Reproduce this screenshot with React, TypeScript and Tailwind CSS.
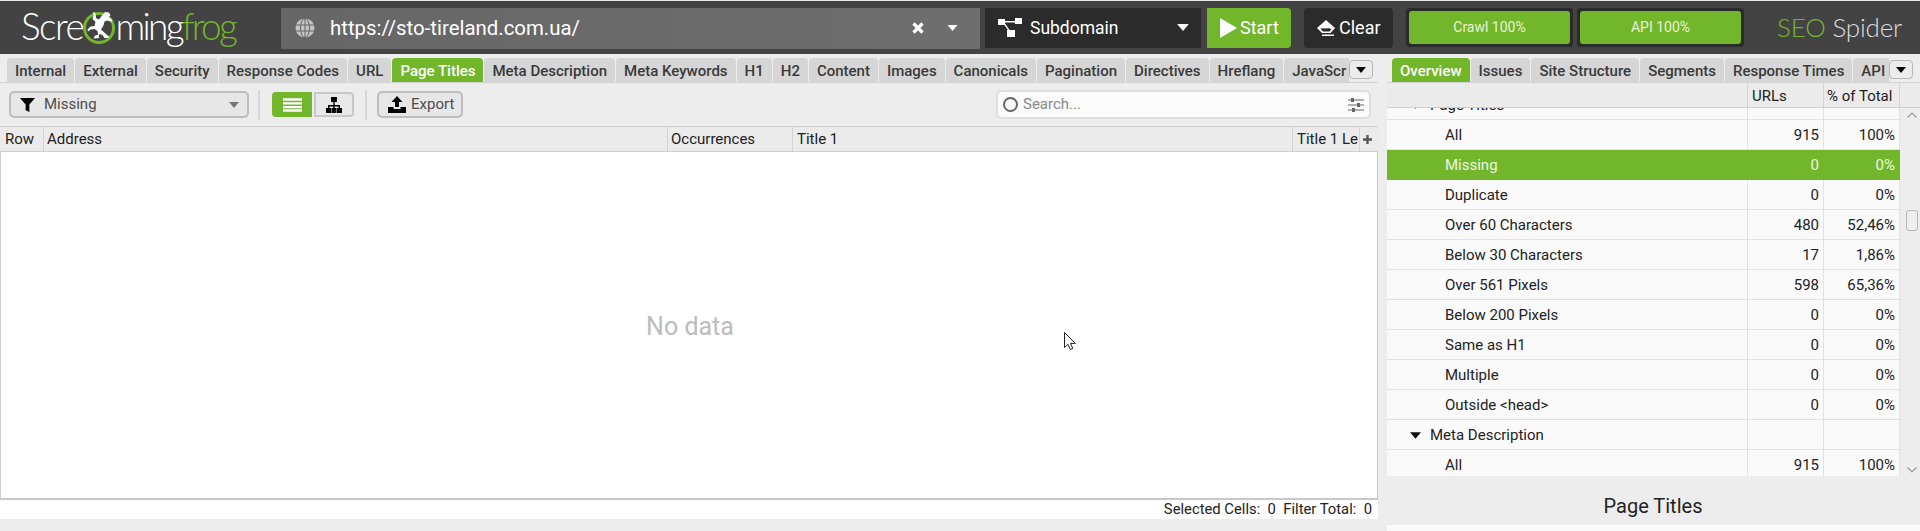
import React from "react";

const green = "bg-[#72b62b]";

function Caret({ className }: { className: string }) {
  return (
    <svg viewBox="0 0 10 6" className={className} fill="currentColor">
      <path d="M0 0h10L5 6z" />
    </svg>
  );
}

function FrogMark() {
  return (
    <svg viewBox="0 0 36 36" className="w-[36px] h-[36px] -mx-[2px] shrink-0 mt-[3px]">
      <circle cx="18" cy="19" r="14.500" fill="none" stroke="#72b62b" strokeWidth="3" />
      <path
        d="M12 3l2.500 1 .5 5 3 1.500 3-4 3-3.500 4 .5 1.500 3-2 1.500 4 3-1 2-4-1.500-3 1-1 4-2.500 4 5 4.500 3 2.500-.5 1.500h-4l-2-3-3-1-1 3 1 1-6 .5 1.500-3 3-.5-.5-4-3-2-4 .5-2.500 2-.5-2 3-3 4-.5 1-4-3-3 1-4z"
        fill="#fff"
      />
    </svg>
  );
}

function HeaderBar() {
  return (
    <header className="h-[54px] shrink-0 border-t border-[#e8e8e8] bg-[#434343] flex items-center [font-family:Roboto,sans-serif]">
      <div className="w-[281px] shrink-0 pl-[21px] flex items-center h-full pb-[4px] [font-family:Lato,sans-serif] font-light text-[37px] tracking-[-1.5px] text-white leading-none">
        <span>Scre</span>
        <FrogMark />
        <span className="tracking-[-2.700px]">ming</span>
        <span className="tracking-[-2.700px] text-[#72b62b]">frog</span>
      </div>
      <div className="w-[699px] shrink-0 h-[41px] mt-[1px] flex items-center bg-gradient-to-r from-[#666666] to-[#6e6e6e] pl-[14px] text-white">
        <svg viewBox="0 0 20 20" className="w-[20px] h-[20px] text-[#c4c4c4]" fill="none" stroke="currentColor">
          <circle cx="10" cy="10" r="9.500" fill="currentColor" stroke="none" />
          <g stroke="#666" strokeWidth="1">
            <ellipse cx="10" cy="10" rx="4.500" ry="9.500" />
            <path d="M10 0v20M0.500 7h19M0.500 13h19" />
          </g>
        </svg>
        <span className="ml-[15px] pt-[1px] text-[20.400px] flex-1">https://sto-tireland.com.ua/</span>
        <svg viewBox="0 0 12 12" className="w-[12px] h-[12px] mr-[23px]" stroke="#fff" strokeWidth="3.200">
          <path d="M1.500 1.500l9 9M10.500 1.500l-9 9" />
        </svg>
        <Caret className="w-[11px] h-[6px] mr-[22px] text-white" />
      </div>
      <div className="ml-[5px] w-[216px] shrink-0 h-[40px] flex items-center bg-[#2b2b2b] pl-[13px] text-white">
        <svg viewBox="0 0 24 19" className="w-[24px] h-[19px]" fill="#fff">
          <rect x="0" y="1" width="7" height="6" />
          <rect x="17" y="0" width="7" height="6" />
          <rect x="9" y="12" width="8" height="7" />
          <path d="M6 3h12v1.500H6zM5 5l1-1 7 10-1 1z" />
        </svg>
        <span className="ml-[8px] pt-[1px] text-[17.500px] flex-1">Subdomain</span>
        <Caret className="w-[12px] h-[7px] mr-[12px] text-white" />
      </div>
      <div className={`ml-[6px] w-[84px] shrink-0 h-[40px] flex items-center pl-[13px] rounded-r-[4px] text-white ${green}`}>
        <svg viewBox="0 0 17 20" className="w-[17px] h-[20px]" fill="#fff">
          <path d="M0 0l17 10L0 20z" />
        </svg>
        <span className="ml-[3px] text-[18px]">Start</span>
      </div>
      <div className="ml-[13px] w-[89px] shrink-0 h-[40px] flex items-center pl-[13px] rounded-[4px] bg-[#2b2b2b] text-white">
        <svg viewBox="0 0 18 16" className="w-[18px] h-[16px]" fill="#fff">
          <path d="M9 0l9 8-4.500 5H5L0 8z" />
          <path d="M3.200 8.600L6 11.500h6.500l1.800-2-1.500-1.200z" fill="#2b2b2b" />
          <rect x="5" y="14.500" width="12" height="1.500" />
        </svg>
        <span className="ml-[4px] text-[18px]">Clear</span>
      </div>
      <div className="ml-[13px] w-[167px] shrink-0 h-[39px] p-[3px] rounded-[4px] bg-[#2b2b2b]">
        <div className={`h-full rounded-[3px] flex items-center justify-center text-[14px] text-[#e8f3d8] ${green}`}>Crawl 100%</div>
      </div>
      <div className="ml-[4px] w-[167px] shrink-0 h-[39px] p-[3px] rounded-[4px] bg-[#2b2b2b]">
        <div className={`h-full rounded-[3px] flex items-center justify-center text-[14px] text-[#e8f3d8] ${green}`}>API 100%</div>
      </div>
      <div className="ml-[33px] [font-family:Lato,sans-serif] font-light text-[26px] leading-none tracking-[-0.200px] pb-[2px]">
        <span className="text-[#72b62b]">SEO</span> <span className="text-[#dcdcdc]">Spider</span>
      </div>
    </header>
  );
}

function Tab({ label, active }: { label: string; active?: boolean }) {
  return (
    <div
      className={`h-[24px] px-[8px] pt-[2px] shrink-0 flex items-center rounded-t-[4px] text-[15px] font-medium whitespace-nowrap ${
        active ? "bg-[#72b62b] text-white" : "bg-[#d6d6d6] text-[#3a3a3a]"
      }`}
    >
      {label}
    </div>
  );
}

function MoreButton() {
  return (
    <div className="w-[24px] h-[19px] shrink-0 mb-[3px] flex items-center justify-center rounded-[4px] border border-[#b8b8b8] bg-[#ececec]">
      <Caret className="w-[10px] h-[6px] text-black" />
    </div>
  );
}

const leftTabs = ["Internal", "External", "Security", "Response Codes", "URL", "Page Titles", "Meta Description", "Meta Keywords", "H1", "H2", "Content", "Images", "Canonicals", "Pagination", "Directives", "Hreflang", "JavaScr"];
const rightTabs = ["Overview", "Issues", "Site Structure", "Segments", "Response Times", "API"];

function ToolbarSep() {
  return <div className="w-[2px] h-[30px] shrink-0 bg-[#d8d8d8]" />;
}

function Toolbar() {
  return (
    <div className="h-[43px] shrink-0 flex items-center pl-[9px] text-[15px] text-[#4d4d4d]">
      <div className="w-[240px] h-[27px] flex items-center rounded-[5px] border-2 border-[#bdbdbd] bg-[#e7e7e7] pl-[9px]">
        <svg viewBox="0 0 16 16" className="w-[15px] h-[15px]" fill="#000">
          <path d="M0 1h16l-6 7v8l-4-2V8z" />
        </svg>
        <span className="ml-[9px] flex-1">Missing</span>
        <Caret className="w-[10px] h-[6px] mr-[8px] text-[#777]" />
      </div>
      <div className="ml-[9px]"><ToolbarSep /></div>
      <div className={`ml-[12px] w-[40px] h-[25px] rounded-l-[4px] flex items-center justify-center ${green}`}>
        <svg viewBox="0 0 20 14" className="w-[19px] h-[14px]" fill="#fff">
          <path d="M0 0h20v2.500H0zM0 4h20v2.500H0zM0 8h20v2.500H0zM0 11.500h20V14H0z" />
        </svg>
      </div>
      <div className="ml-[2px] w-[40px] h-[25px] rounded-r-[4px] border-2 border-[#c8c8c8] bg-[#e9e9e9] flex items-center justify-center">
        <svg viewBox="0 0 18 16" className="w-[18px] h-[16px]" fill="#000">
          <path d="M6 0h6v5H6zM1 11h5v5H1zM6.500 11h5v5h-5zM12 11h5v5h-5zM8.300 5h1.400v3h5.300v3h-1.400V9.400H9.700V11H8.300V9.400H4.400V11H3V8h5.300z" />
        </svg>
      </div>
      <div className="ml-[11px]"><ToolbarSep /></div>
      <div className="ml-[10px] w-[86px] h-[27px] rounded-[5px] border-2 border-[#bdbdbd] bg-[#e7e7e7] flex items-center pl-[9px]">
        <svg viewBox="0 0 18 17" className="w-[18px] h-[17px]" fill="#000">
          <path d="M9 0l5.500 6H11v5H7V6H3.500zM0 11h5.500v2h7v-2H18v6H0z" />
        </svg>
        <span className="ml-[5px]">Export</span>
      </div>
      <div className="ml-[533px] w-[375px] h-[29px] rounded-[6px] border-2 border-[#dedede] bg-[#fbfbfb] flex items-center pl-[5px] text-[#8a8a8a]">
        <span className="w-[15px] h-[15px] rounded-full border-2 border-[#666] shrink-0" />
        <span className="ml-[5px] flex-1">Search...</span>
        <svg viewBox="0 0 16 14" className="w-[16px] h-[14px] mr-[5px]" fill="#666">
          <path d="M0 1.500h16v1H0zM0 6.500h16v1H0zM0 11.500h16v1H0z" />
          <rect x="3" y="0" width="3" height="4" />
          <rect x="9" y="5" width="3" height="4" />
          <rect x="4" y="10" width="3" height="4" />
        </svg>
      </div>
    </div>
  );
}

function TableHeader() {
  return (
    <div className="h-[26px] shrink-0 flex items-center bg-[#ebebeb] border-y border-[#cfcfcf] text-[15px] text-[#222] leading-none">
      <div className="w-[44px] h-full flex items-center pl-[5px] border-r border-[#d4d4d4]">Row</div>
      <div className="w-[624px] h-full flex items-center pl-[3px] border-r border-[#d4d4d4]">Address</div>
      <div className="w-[125px] h-full flex items-center pl-[3px] border-r border-[#d4d4d4]">Occurrences</div>
      <div className="w-[500px] h-full flex items-center pl-[4px] border-r border-[#d4d4d4]">Title 1</div>
      <div className="w-[67px] h-full flex items-center pl-[4px] border-r border-[#d4d4d4] overflow-hidden whitespace-nowrap">Title 1 Le</div>
      <div className="flex-1 h-full flex items-center pl-[3px]">
        <svg viewBox="0 0 10 10" className="w-[9px] h-[9px]" fill="#555">
          <path d="M3.700 0h2.600v3.700H10v2.600H6.300V10H3.700V6.300H0V3.700h3.700z" />
        </svg>
      </div>
    </div>
  );
}

function LeftPane() {
  return (
    <section className="w-[1378px] shrink-0 flex flex-col relative">
      <div className="h-[29px] shrink-0 flex items-end pl-[7px] border-b border-[#d2d2d2]">
        <div className="w-[1342px] flex gap-[1px] overflow-hidden">
          {leftTabs.map((t) => (
            <Tab key={t} label={t} active={t === "Page Titles"} />
          ))}
        </div>
        <MoreButton />
      </div>
      <Toolbar />
      <TableHeader />
      <div className="h-[348px] shrink-0 bg-white border-x border-b-2 border-[#c8c8c8] border-l-[#d0d0d0] flex items-center justify-center pt-[4px] pl-[2px] text-[25px] text-[#bcbcbc]">
        No data
      </div>
      <div className="h-[19px] shrink-0 bg-white flex items-center justify-end pr-[6px] text-[14.800px] text-[#222] leading-none whitespace-pre">
        Selected Cells:  0  Filter Total:  0
      </div>
      <svg viewBox="0 0 13 20" className="absolute left-[1064px] top-[278px] w-[13px] h-[20px]" fill="#fff" stroke="#222" strokeWidth="1">
        <path d="M.500.500v15l3.500-3.200 2.300 5.200 2.500-1.100-2.300-5h4.800z" />
      </svg>
    </section>
  );
}

type Row = { label: string; urls?: string; pct?: string; head?: boolean; active?: boolean };

const rows: Row[] = [
  { label: "Page Titles", head: true },
  { label: "All", urls: "915", pct: "100%" },
  { label: "Missing", urls: "0", pct: "0%", active: true },
  { label: "Duplicate", urls: "0", pct: "0%" },
  { label: "Over 60 Characters", urls: "480", pct: "52,46%" },
  { label: "Below 30 Characters", urls: "17", pct: "1,86%" },
  { label: "Over 561 Pixels", urls: "598", pct: "65,36%" },
  { label: "Below 200 Pixels", urls: "0", pct: "0%" },
  { label: "Same as H1", urls: "0", pct: "0%" },
  { label: "Multiple", urls: "0", pct: "0%" },
  { label: "Outside <head>", urls: "0", pct: "0%" },
  { label: "Meta Description", head: true },
  { label: "All", urls: "915", pct: "100%" },
];

function OverviewRow({ row }: { row: Row }) {
  const line = row.active ? "border-[#72b62b]" : "border-[#e2e2e2]";
  return (
    <div className={`h-[30px] flex text-[15px] border-b ${line} ${row.active ? "bg-[#72b62b] text-[#eef7e2]" : "bg-[#fafafa] text-[#222]"}`}>
      <div className={`w-[361px] pt-[2px] flex items-center ${row.head ? "pl-[23px]" : "pl-[58px]"} border-r ${line}`}>
        {row.head && <Caret className="w-[11px] h-[9px] mr-[9px] text-[#111]" />}
        {row.label}
      </div>
      <div className={`w-[76px] pt-[2px] flex items-center justify-end pr-[4px] border-r ${line}`}>{row.urls}</div>
      <div className={`w-[76px] pt-[2px] flex items-center justify-end pr-[4px] border-r ${line}`}>{row.pct}</div>
    </div>
  );
}

function RightPane() {
  return (
    <section className="ml-[9px] w-[533px] shrink-0 flex flex-col">
      <div className="h-[29px] shrink-0 flex items-end pl-[5px] pr-[7px] border-b border-[#d2d2d2]">
        <div className="w-[497px] flex gap-[1px] overflow-hidden">
          {rightTabs.map((t) => (
            <Tab key={t} label={t} active={t === "Overview"} />
          ))}
        </div>
        <MoreButton />
      </div>
      <div className="h-[25px] shrink-0 flex bg-[#ebebeb] border-b border-[#cfcfcf] text-[15px] text-[#222] leading-none">
        <div className="w-[361px] border-r border-[#d4d4d4]" />
        <div className="w-[76px] pt-[2px] flex items-center pl-[4px] border-r border-[#d4d4d4]">URLs</div>
        <div className="w-[76px] pt-[2px] flex items-center pl-[3px] border-r border-[#d4d4d4]">% of Total</div>
      </div>
      <div className="h-[368px] shrink-0 flex">
        <div className="w-[513px] h-full overflow-hidden">
          <div className="-mt-[18px]">
            {rows.map((r, i) => (
              <OverviewRow key={i} row={r} />
            ))}
          </div>
        </div>
        <div className="flex-1 flex flex-col items-center pl-[3px] text-[#9a9a9a]">
          <svg viewBox="0 0 10 6" className="w-[10px] h-[6px] mt-[4px]" fill="none" stroke="currentColor" strokeWidth="1.200">
            <path d="M.500 5.500L5 1l4.500 4.500" />
          </svg>
          <div className="w-[12px] h-[21px] mt-[92px] rounded-[3px] border border-[#b8b8b8] bg-[#efefef]" />
          <svg viewBox="0 0 10 6" className="w-[10px] h-[6px] mt-auto mb-[3px]" fill="none" stroke="currentColor" strokeWidth="1.200">
            <path d="M.500.500L5 5l4.500-4.500" />
          </svg>
        </div>
      </div>
      <div className="h-[49px] shrink-0 flex items-center justify-center pt-[10px] pr-[1px] text-[20px] text-[#222]">Page Titles</div>
      <div className="flex-1 bg-[#fafafa]" />
    </section>
  );
}

export default function App() {
  return (
    <div className="w-[1920px] h-[531px] overflow-hidden flex flex-col bg-[#ededed] [font-family:Roboto,sans-serif]">
      <HeaderBar />
      <main className="flex-1 min-h-0 flex">
        <LeftPane />
        <RightPane />
      </main>
    </div>
  );
}
